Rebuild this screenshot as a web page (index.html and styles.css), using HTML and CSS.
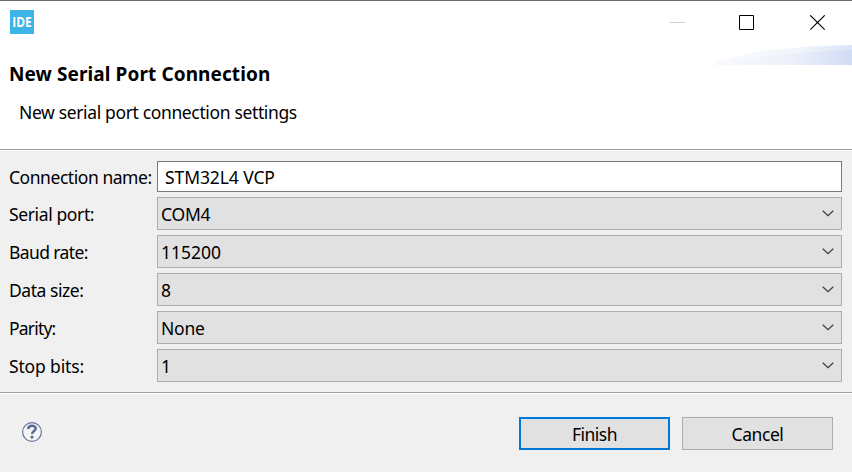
FILE: index.html
```html
<!DOCTYPE html>
<html lang="en">
<head>
<meta charset="utf-8">
<title>New Serial Port Connection</title>
<link rel="stylesheet" href="styles.css">
</head>
<body>
<main class="dialog">
  <header class="banner">
    <div class="titlebar">
      <div class="app-icon"><span>IDE</span></div>
      <svg class="window-controls" width="156" height="16" viewBox="0 0 156 16" fill="none">
        <path d="M0 7.5H15" stroke="#ccc"/>
        <path d="M69.5 .5H83.5V14.5H69.5Z" stroke="#000"/>
        <path d="M140.3 .3L154.7 14.7M154.7 .3L140.3 14.7" stroke="#000" stroke-width="1.1"/>
      </svg>
    </div>
    <svg class="swoosh" width="140" height="20" viewBox="0 0 140 20">
      <defs>
        <linearGradient id="back"><stop offset="0" stop-color="#f8fafe"/><stop offset=".6" stop-color="#f2f6fc"/><stop offset="1" stop-color="#dce5f7"/></linearGradient>
        <linearGradient id="front"><stop offset="0" stop-color="#f8fafe"/><stop offset=".55" stop-color="#edf0fa"/><stop offset="1" stop-color="#d0dbf4"/></linearGradient>
      </defs>
      <path d="M0 20C18 9 75 1 140 0V20Z" fill="url(#back)"/>
      <path d="M8 20C40 11 88 7 140 5V20Z" fill="url(#front)"/>
    </svg>
    <h1 class="title">New Serial Port Connection</h1>
    <p class="description">New serial port connection settings</p>
  </header>
  <section class="form">
    <label class="label name">Connection name:</label><div class="field input"><span>STM32L4 VCP</span></div>
    <label class="label port">Serial port:</label><div class="field combo"><span>COM4</span><svg class="chevron" viewBox="0 0 12 7"><path d="M.7 .7L6 5.7L11.3 .7"/></svg></div>
    <label class="label baud">Baud rate:</label><div class="field combo"><span class="digits">115200</span><svg class="chevron" viewBox="0 0 12 7"><path d="M.7 .7L6 5.7L11.3 .7"/></svg></div>
    <label class="label">Data size:</label><div class="field combo"><span>8</span><svg class="chevron" viewBox="0 0 12 7"><path d="M.7 .7L6 5.7L11.3 .7"/></svg></div>
    <label class="label parity">Parity:</label><div class="field combo"><span>None</span><svg class="chevron" viewBox="0 0 12 7"><path d="M.7 .7L6 5.7L11.3 .7"/></svg></div>
    <label class="label stop">Stop bits:</label><div class="field combo"><span>1</span><svg class="chevron" viewBox="0 0 12 7"><path d="M.7 .7L6 5.7L11.3 .7"/></svg></div>
  </section>
  <footer class="footer">
    <svg class="help" width="22" height="22" viewBox="0 0 22 22" fill="none">
      <circle cx="11" cy="11" r="9.4" fill="#f5f5f5" stroke="#66779c" stroke-width="1.2"/>
      <path d="M7.3 8C7.4 3.9 14.7 3.9 14.7 7.5C14.7 10 11.1 9.9 11.1 13" stroke="#566a94" stroke-width="2.5"/>
      <circle cx="11" cy="16.1" r="1.6" fill="#566a94"/>
    </svg>
    <button class="button primary">Finish</button>
    <button class="button">Cancel</button>
  </footer>
</main>
</body>
</html>
```
FILE: styles.css
```css
* { box-sizing: border-box; }
body {
  margin: 0;
  font: 17.5px/24px "Noto Sans", "Open Sans", sans-serif;
  color: #000;
}
.dialog {
  display: flex;
  flex-direction: column;
  width: 852px;
  height: 472px;
  overflow: hidden;
  background: #f0f0f0;
}
.banner {
  position: relative;
  height: 151px;
  background: #fff;
  border-top: 1px solid #6c6c6c;
  border-bottom: 1px solid #fff;
  box-shadow: inset 0 -1px #a0a0a0;
}
.titlebar {
  display: flex;
  justify-content: space-between;
  height: 44px;
  padding: 9px 26px 0 10px;
}
.app-icon {
  width: 24px;
  height: 24px;
  background: #3cb4e6;
  color: #fff;
  font: bold 14px/24px "Open Sans", sans-serif;
  text-align: center;
}
.app-icon span { display: block; width: 24px; transform: scaleX(.85); }
.window-controls { margin-top: 5px; }
.swoosh { position: absolute; top: 44px; right: 0; }
.title {
  margin: 17px 0 0 9px;
  font-size: 19px;
  line-height: 25px;
  font-weight: bold;
  letter-spacing: .09px;
}
.description { margin: 13px 0 0 19px; letter-spacing: -.36px; }
.form {
  display: grid;
  grid-template-columns: 148px 1fr;
  grid-template-rows: 31px repeat(5, 33px);
  row-gap: 5px;
  height: 243px;
  padding: 10px 10px 0 9px;
  border-bottom: 1px solid #fff;
  box-shadow: inset 0 -1px #a0a0a0;
}
.label { line-height: 34px; letter-spacing: -.45px; white-space: nowrap; }
.name { line-height: 32px; }
.port { letter-spacing: -.38px; }
.baud { letter-spacing: -.6px; }
.parity { letter-spacing: -.8px; }
.stop { letter-spacing: -.15px; }
.field {
  display: flex;
  align-items: center;
  justify-content: space-between;
  padding: 0 7px 0 3px;
  border: 1px solid #adadad;
  background: #e1e1e1;
  letter-spacing: -.25px;
}
.input { padding: 1px 7px 0; border-color: #7a7a7a; background: #fff; letter-spacing: -.1px; }
.digits { letter-spacing: 0; }
.chevron {
  width: 12px;
  height: 7px;
  margin-top: 0;
  fill: none;
  stroke: #404040;
  stroke-width: 1.3;
}
.footer { display: flex; padding: 23px 19px 0 21px; }
.help { margin: 4px auto 0 0; }
.button {
  width: 151px;
  height: 33px;
  margin-left: 12px;
  padding: 0;
  border: 1px solid #adadad;
  background: #e1e1e1;
  font: inherit;
  color: #000;
  letter-spacing: -.45px;
}
.primary { border: 2px solid #0078d7; letter-spacing: -.5px; }
```
